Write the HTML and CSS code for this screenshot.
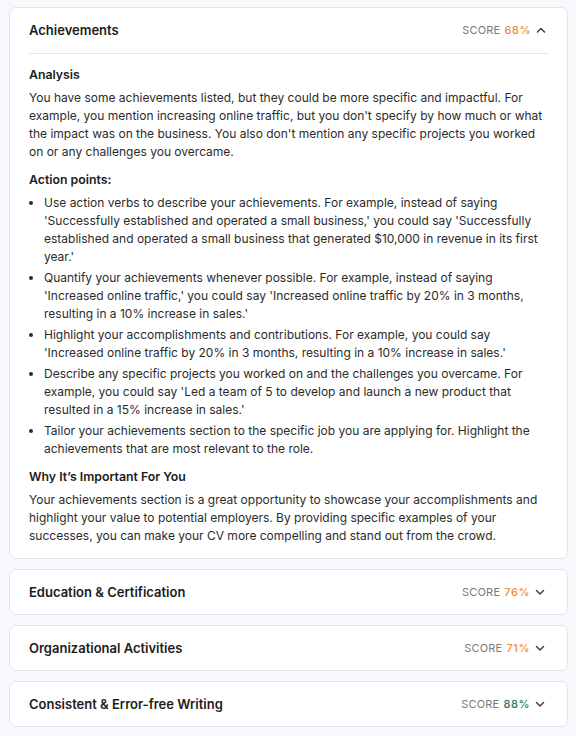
FILE: index.html
```html
<!DOCTYPE html>
<html lang="en">
<head>
	<meta charset="UTF-8">
	<title>CV review</title>
	<link rel="stylesheet" href="styles.css">
</head>
<body>
	<div class="wrapper">
		<div class="card open">
			<div class="card-head">
				<h3>Achievements</h3>
				<div class="score">SCORE <span class="num warn">68%</span>
					<svg class="chev" width="10" height="6" viewBox="0 0 10 6"><path d="M1.5 5L5 1.5L8.5 5" /></svg>
				</div>
			</div>
			<div class="card-body">
				<h4>Analysis</h4>
				<p>You have some achievements listed, but they could be more specific and impactful. For example, you mention increasing online traffic, but you don't specify by how much or what the impact was on the business. You also don't mention any specific projects you worked on or any challenges you overcame.</p>
				<h4>Action points:</h4>
				<ul>
					<li>Use action verbs to describe your achievements. For example, instead of saying 'Successfully established and operated a small business,' you could say 'Successfully established and operated a small business that generated $10,000 in revenue in its first year.'</li>
					<li>Quantify your achievements whenever possible. For example, instead of saying 'Increased online traffic,' you could say 'Increased online traffic by 20% in 3 months, resulting in a 10% increase in sales.'</li>
					<li>Highlight your accomplishments and contributions. For example, you could say 'Increased online traffic by 20% in 3 months, resulting in a 10% increase in sales.'</li>
					<li>Describe any specific projects you worked on and the challenges you overcame. For example, you could say 'Led a team of 5 to develop and launch a new product that resulted in a 15% increase in sales.'</li>
					<li>Tailor your achievements section to the specific job you are applying for. Highlight the achievements that are most relevant to the role.</li>
				</ul>
				<h4>Why It’s Important For You</h4>
				<p>Your achievements section is a great opportunity to showcase your accomplishments and highlight your value to potential employers. By providing specific examples of your successes, you can make your CV more compelling and stand out from the crowd.</p>
			</div>
		</div>

		<div class="card">
			<div class="card-head">
				<h3>Education &amp; Certification</h3>
				<div class="score">SCORE <span class="num warn">76%</span>
					<svg class="chev" width="10" height="6" viewBox="0 0 10 6"><path d="M1.5 1.5L5 5L8.5 1.5" /></svg>
				</div>
			</div>
		</div>

		<div class="card">
			<div class="card-head">
				<h3>Organizational Activities</h3>
				<div class="score">SCORE <span class="num warn">71%</span>
					<svg class="chev" width="10" height="6" viewBox="0 0 10 6"><path d="M1.5 1.5L5 5L8.5 1.5" /></svg>
				</div>
			</div>
		</div>

		<div class="card">
			<div class="card-head">
				<h3>Consistent &amp; Error-free Writing</h3>
				<div class="score">SCORE <span class="num good">88%</span>
					<svg class="chev" width="10" height="6" viewBox="0 0 10 6"><path d="M1.5 1.5L5 5L8.5 1.5" /></svg>
				</div>
			</div>
		</div>
	</div>
</body>
</html>
```

FILE: styles.css
```css
html,
body,
h3,
h4,
p,
ul,
li {
	margin: 0;
	padding: 0;
}
body {
	background: #f8f8fc;
	font-family: Inter, "Liberation Sans", sans-serif;
	font-size: 12px;
	line-height: 18px;
	color: #2b2b2b;
}
.wrapper {
	display: flex;
	flex-direction: column;
	gap: 10px;
	padding: 7px 8px 0 9px;
}
.card {
	background: #fff;
	border: 1px solid #e3e3e8;
	border-radius: 7px;
}
.card-head {
	display: flex;
	align-items: center;
	justify-content: space-between;
	padding: 13px 20px 13px 19px;
}
.open .card-head {
	margin: 0 18px 0 19px;
	padding: 13px 1px 14px 0;
	border-bottom: 1px solid #e6e6ea;
}
.card-head h3 {
	font-size: 13px;
	font-weight: 600;
	color: #1c1c1c;
}
.score {
	display: flex;
	align-items: center;
	font-size: 11px;
	color: #7a7a7a;
	letter-spacing: 0.2px;
}
.score .num {
	margin-left: 4px;
	font-weight: 500;
	letter-spacing: 0.6px;
}
.warn {
	color: #f28a34;
}
.good {
	color: #1b7a56;
}
.chev {
	margin-left: 5px;
	margin-right: 2px;
}
.chev path {
	fill: none;
	stroke: #444;
	stroke-width: 1.5;
	stroke-linecap: round;
	stroke-linejoin: round;
}
.card-body {
	padding: 12px 20px 13px 19px;
}
.card-body h4 {
	font-size: 12.3px;
	font-weight: 600;
	color: #1c1c1c;
	margin-bottom: 5px;
}
.card-body p,
.card-body ul {
	margin-bottom: 10px;
}
.card-body p:last-child {
	margin-bottom: 0;
}
.card-body ul {
	padding-left: 15px;
}
.card-body li {
	margin-bottom: 3px;
}
.card-body li:last-child {
	margin-bottom: 0;
}
```
